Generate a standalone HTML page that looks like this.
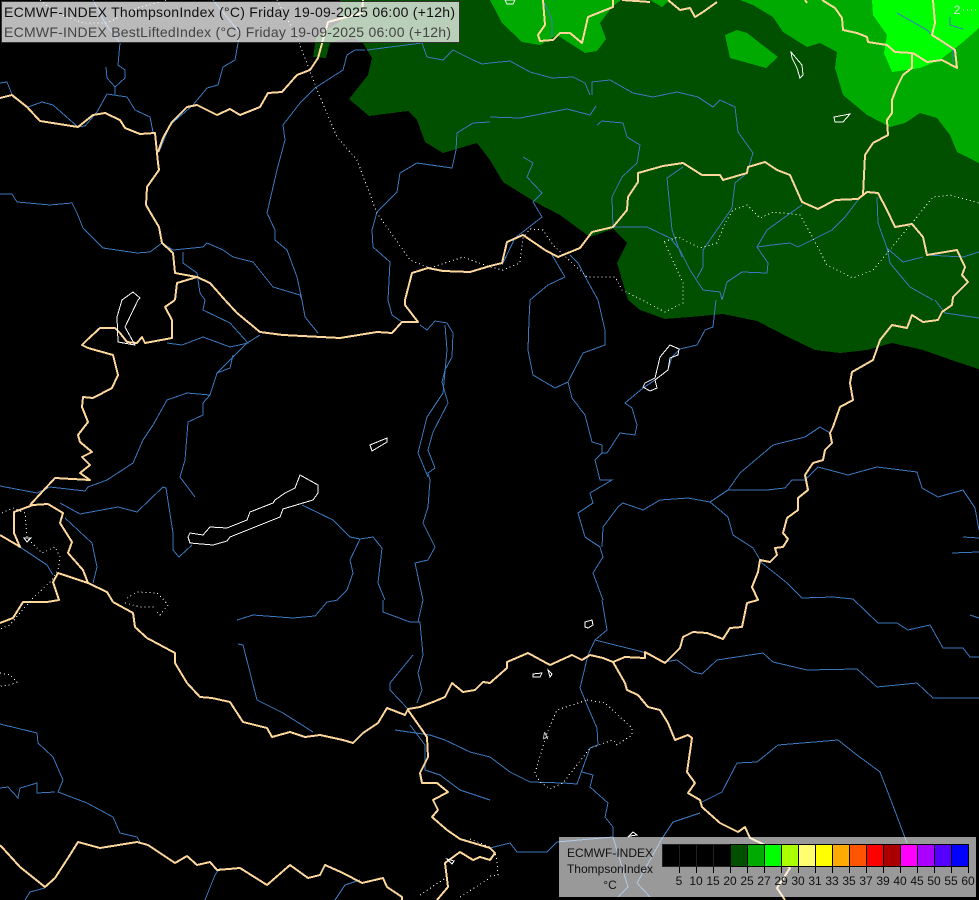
<!DOCTYPE html>
<html><head><meta charset="utf-8"><style>
html,body{margin:0;padding:0;background:#000}
svg{display:block}
text{font-family:"Liberation Sans",sans-serif}
.r polyline{fill:none;stroke:#3b78bd;stroke-width:1}
.b polyline{fill:none;stroke:#fdd69c;stroke-width:2;stroke-linejoin:round}
.d polyline{fill:none;stroke:#fff;stroke-width:1;stroke-dasharray:1 3}
.w polygon{fill:none;stroke:#fff;stroke-width:1}
.t line{stroke:#000;stroke-width:1}
.l text{font-size:12px;fill:#111;text-anchor:middle}
</style></head><body>
<svg width="979" height="900" viewBox="0 0 979 900" xmlns="http://www.w3.org/2000/svg" shape-rendering="crispEdges">
<rect width="979" height="900" fill="#000"/>
<!-- dark green -->
<polygon fill="#005000" points="340,0 340,22 322,32 316,38 313,57 326,58 330,43 353,37 363,43 372,58 368,75 349,99 369,116 408,111 417,120 425,142 443,153 477,143 490,160 503,182 535,202 560,215 590,237 613,229 627,243 617,263 628,300 640,310 665,319 690,317 723,314 757,321 790,338 815,350 840,353 867,350 892,343 923,350 957,362 979,369 979,0"/>
<!-- mid green -->
<polygon fill="#00aa00" points="490,0 502,23 522,42 540,45 557,35 585,53 597,51 606,39 600,23 612,7 621,0"/>
<polygon fill="#00aa00" points="650,0 662,7 670,0"/>
<polygon fill="#00aa00" points="740,0 753,5 773,17 783,32 807,47 820,43 837,52 835,68 843,95 867,115 890,127 905,123 920,113 937,118 950,135 957,152 979,163 979,0"/>
<polygon fill="#00aa00" points="725,35 737,30 747,33 778,57 766,68 730,58"/>
<!-- bright green -->
<polygon fill="#00ff00" points="872,0 873,15 887,35 884,53 892,72 920,68 940,60 963,42 979,28 979,0"/>
<!-- rivers -->
<g class="r">
<polyline points="0,83 7,82 13,97 28,107 42,102 53,105 78,127 85,126 97,112 107,94 127,97 135,110 150,117 153,132"/>
<polyline points="115,95 115,87 125,78 125,70 118,65 120,43 105,23 93,0"/>
<polyline points="115,87 107,78 106,67"/>
<polyline points="159,152 170,125 193,105 207,88 218,85 223,67 235,60 238,43 240,33 213,0"/>
<polyline points="0,194 12,194 17,202 50,205 72,203 77,213 83,228 103,248 137,253 150,252 162,243"/>
<polyline points="162,243 173,250 203,247 207,243 223,250 233,257 253,262 273,287 300,295 302,300 305,317 318,333"/>
<polyline points="183,252 183,263 197,273 200,293 205,300 203,310 230,323 248,343 230,347 203,337 182,345 167,343"/>
<polyline points="365,50 355,50 347,55 343,70 315,88 300,103 283,125 285,140 277,170 267,213 275,230 275,240 287,250 297,277 302,300"/>
<polyline points="490,122 473,123 457,133 456,150 452,168 417,163 400,173 397,192 377,212 372,230 373,247 390,262 388,300 392,315 402,322"/>
<polyline points="367,50 422,43 427,57 443,60 453,50 473,60 482,64 490,63 510,61 530,72 552,78 573,77 585,83 590,95"/>
<polyline points="592,95 592,82 610,80 633,93 653,97 677,92 698,97 713,107 720,100 735,107 738,132 753,153 747,173 735,183 732,208 703,250 703,267 697,278"/>
<polyline points="490,117 520,118 567,109 590,115 596,106"/>
<polyline points="597,125 602,121 623,123 627,137 640,145 637,163 622,177 612,197 613,227"/>
<polyline points="613,227 647,227 670,238 680,250 690,270 703,290 720,292 722,300"/>
<polyline points="683,167 667,178 672,230 682,257"/>
<polyline points="523,157 533,163 527,177 542,193 533,202 542,217 515,238 502,265"/>
<polyline points="552,255 565,277 548,285 530,300 529,320 528,350 533,375 555,388 568,382"/>
<polyline points="570,255 578,263 587,280 598,300"/>
<polyline points="722,300 727,282 742,272 767,273 768,263 757,247 767,230 785,217 802,205"/>
<polyline points="757,247 772,245 790,243 798,247 832,230 845,217 858,200"/>
<polyline points="877,197 878,223 887,248 903,262 923,257"/>
<polyline points="887,248 890,263 910,287 933,300"/>
<polyline points="927,255 963,257 979,252"/>
<polyline points="935,300 945,313 979,318"/>
<polyline points="543,0 552,20 552,37"/>
<polyline points="897,13 927,30 932,35 953,50 953,63"/>
<polyline points="950,17 950,25 963,29"/>
<polyline points="598,300 605,330 605,345 583,353 568,382 572,398 585,415 592,442 602,445 602,453 595,460 600,480 612,480 590,493 593,503 578,513 585,537 600,547 603,557 593,573 603,600"/>
<polyline points="716,300 713,327 705,330 697,345 680,349 672,357 668,370 655,380 643,388 625,403 632,408 637,425 635,435 620,433 607,453 602,453"/>
<polyline points="602,547 603,527 618,507 623,503 643,510 660,500 688,498 710,502 728,490 740,473 773,445 805,437 820,427 830,433"/>
<polyline points="728,490 767,490 785,488 792,480 805,480 818,467 848,475 877,467 917,472 922,488 938,497 963,490 975,508 979,530"/>
<polyline points="710,502 728,517 733,535 753,548 762,563 787,583 802,598 833,597 853,599 878,623 897,623 908,630 930,625 943,648 963,648 970,657 979,657"/>
<polyline points="963,537 979,538"/>
<polyline points="952,553 979,552"/>
<polyline points="970,615 979,618"/>
<polyline points="602,600 607,630 595,640 588,655 580,688 590,712 597,728 598,745 590,748 577,784 563,783 530,782 510,772 490,757 470,752 445,740 430,735 395,730"/>
<polyline points="595,640 643,652 663,662 677,660 693,672 702,674 717,660 763,653 773,662 807,670 857,669 877,687 917,683 933,698 979,698"/>
<polyline points="582,772 593,775 590,787 608,803 605,817 613,827 613,837 628,887 618,897"/>
<polyline points="700,813 673,822 663,837 637,883 650,897"/>
<polyline points="702,802 722,792 737,763 757,762 778,745 838,740 857,755 880,772 892,803 907,843"/>
<polyline points="490,848 510,843 517,852 547,852 557,842 613,837"/>
<polyline points="0,724 37,733 38,743 53,757 63,780 58,792 87,803 113,817 120,833 137,837 140,842"/>
<polyline points="0,788 8,787 18,798 20,788 37,783 37,793 55,792"/>
<polyline points="237,620 253,615 293,618 315,616 327,602 338,600"/>
<polyline points="238,644 243,645 257,700 283,713 313,732"/>
<polyline points="383,600 383,612 410,622 420,622 423,655 418,673 422,690 417,703"/>
<polyline points="413,655 390,683 390,690 408,709"/>
<polyline points="423,600 418,622"/>
<polyline points="420,325 427,330 435,321 447,323 453,333 452,357 445,370 442,382 448,403 433,432 428,450 435,468 428,473 430,480 428,507 423,523 435,547 428,560 415,563 423,600"/>
<polyline points="445,325 447,350 443,393 427,417 418,453 428,477"/>
<polyline points="0,486 37,493 50,487 85,491 88,487 107,480 133,463 143,440 153,425 167,400 187,393 210,395 217,373 247,343 260,335"/>
<polyline points="210,395 203,403 203,415 188,422 185,460 180,477 195,497"/>
<polyline points="217,373 230,368 233,355"/>
<polyline points="60,503 80,514 118,507 137,512 163,487 166,488 173,533 173,550 179,557 192,545"/>
<polyline points="65,518 92,543 97,567 93,583"/>
<polyline points="20,547 47,565 53,575"/>
<polyline points="302,505 333,520 350,537 360,539 373,537 382,548 378,583 385,600"/>
<polyline points="360,539 350,560 353,573 347,590 337,600"/>
<polyline points="410,725 425,745 425,770 440,775 460,790 490,800"/>
<polyline points="25,900 30,892 45,888"/>
<polyline points="205,900 215,875 220,868"/>
<polyline points="335,900 345,885 360,880"/>
</g>
<!-- borders -->
<g class="b">
<polyline points="0,98 12,95 27,107 40,121 78,127 93,115 105,113 120,120 125,128 140,134 155,133 158,163 159,170 147,187 146,205 153,217 159,227 162,243 173,253 175,273 197,277 210,283 225,300 237,313 260,332 283,335 340,338 377,332 392,333 402,322 418,322 405,305 405,300 412,273 428,268 443,271 470,272 490,266 502,263 507,242 523,235 545,250 558,257 580,248 592,232 613,227 627,210 628,197 638,182 638,173 663,166 683,163 702,175 720,175 723,180 747,173 748,167 765,162 777,170 790,175 802,202 818,209 835,200 858,199 867,192 878,193 887,210 895,227 912,224 923,237 927,255 957,250 965,267 962,275 968,282 953,297 952,305 942,312 938,320 923,322 912,315 907,328 892,325 880,340 873,360 852,372 850,383 853,400 840,407 833,427 830,433 832,443 825,450 823,460 813,463 805,475 808,490 798,498 798,510 787,518 783,533 788,539 783,547 775,548 777,555 770,562 760,560 758,572 752,587 758,600 747,603 742,627 730,628 723,639 707,633 693,632 683,637 680,648 665,663 645,652 645,658 625,657 613,662 603,658 590,655 582,660 572,655 550,665 528,653 507,662 507,668 490,683 483,682 475,690 463,692 452,683 445,697 433,702 420,707 408,709 405,715 387,708 378,723 363,733 353,743 343,740 320,735 305,737 290,732 272,737 267,728 243,722 230,702 212,698 200,697 187,683 175,663 175,653 147,638 135,627 133,613 113,602"/>
<polyline points="158,152 163,138 172,122 187,107 197,105 217,115 230,109 240,115 260,107 268,93 282,92 297,75 310,70 318,58 328,22 362,13 363,0"/>
<polyline points="175,300 177,283 197,277"/>
<polyline points="0,535 17,545 20,547 14,533 14,512 33,505 48,504 63,513 60,523 72,542 68,553 83,570 88,583 107,592 113,602"/>
<polyline points="30,505 55,478 90,480 80,473 90,465 82,457 92,452 80,442 78,435 88,422 82,407 83,397 93,398 112,388 118,375 113,355 88,348 82,345 87,340 100,328 115,328 120,333 127,342 137,343 142,337 145,343 172,338 172,320 165,307 175,300"/>
<polyline points="88,583 58,573 53,582 59,600 47,602 23,602 13,618 0,623"/>
<polyline points="0,845 20,867 45,887 55,878 68,858 78,842 100,848 137,842 148,845 175,863 187,856 197,865 210,862 217,870 240,868 267,885 290,865 308,878 320,875 325,865 343,873 362,883 383,878 387,887 402,897 402,900"/>
<polyline points="408,710 427,737 428,757 420,773 422,783 437,783 448,792 433,800 438,810 432,817 447,830 460,839 490,848 495,853 490,860 480,857 473,860 460,852 445,863 448,887 437,900"/>
<polyline points="613,662 625,683 627,690 638,695 648,707 660,710 668,723 675,740 688,735 692,738 687,772 695,783 688,793 700,800 702,807 720,823 738,832 745,827 750,838 765,845 790,868 777,888 785,900"/>
<polyline points="543,0 545,25 538,35 540,41 553,40 560,33 570,33 582,43 588,17 613,7 613,0"/>
<polyline points="622,0 650,2"/>
<polyline points="668,0 680,10 690,8 695,17 703,12 717,2"/>
<polyline points="805,0 807,3"/>
<polyline points="822,0 835,8 842,18 843,30 857,33 867,37 868,42 887,45 895,52 912,53 912,68 903,75 897,87 892,100 892,113 887,120 888,135 873,143 865,155 863,195"/>
<polyline points="913,53 927,62 942,60 957,68 955,50 940,40 932,35 935,23 933,0"/>
</g>
<!-- dotted contours -->
<g class="d">
<polyline points="40,0 57,13 83,23 107,23 140,7 167,0"/>
<polyline points="277,0 297,37 317,90 337,137 357,160 377,213 410,260 430,268 463,257 490,267 503,270 520,263 523,238 530,229 543,230 553,245 587,277 615,277 622,290 642,300 665,312 683,303 683,283 665,243 663,242 678,237 700,248 717,243 725,223 733,210 747,205 760,218 773,212 800,215 813,238 827,265 853,278 873,270 912,223 933,197 950,195 979,203"/>
<polyline points="963,10 979,10"/>
<polyline points="2,513 13,508 25,513 27,538 42,553 55,547 60,557 58,570 52,580 33,598 20,613 10,625 0,629"/>
<polyline points="127,598 137,592 157,593 162,598 168,605 160,615 155,610"/>
<polyline points="125,603 140,607 155,607"/>
<polyline points="0,673 10,675 17,682 10,685 0,686"/>
<polyline points="587,700 605,703 632,728 632,735 617,745 613,740 590,748 563,783 550,789 540,782 535,773 547,733 557,710 587,700"/>
<polyline points="490,876 498,875 497,860 495,853"/>
<polyline points="420,895 447,877"/>
<polyline points="460,897 490,878"/>
<polyline points="470,839 490,847"/>
</g>
<!-- lakes -->
<g class="w">
<polygon points="190,533 203,535 210,527 227,528 247,520 250,512 273,503 275,500 285,493 295,488 300,475 318,485 318,493 313,500 283,509 280,517 230,537 227,541 213,545 190,543 188,537"/>
<polygon points="370,445 387,438 387,442 372,451"/>
<polygon points="133,292 140,298 138,300 125,327 135,345 118,342 117,317 122,300"/>
<polygon points="670,345 679,349 678,355 670,358 668,370 655,380 657,388 650,391 643,387 645,383 655,378 660,357"/>
<polygon points="791,52 802,65 803,75 800,78 797,68 792,58"/>
<polygon points="834,117 850,114 843,122 835,122"/>
<polygon points="505,0 515,0 513,4 507,4"/>
<polygon points="585,622 592,620 593,625 588,628 585,627"/>
<polygon points="533,674 542,673 540,677 533,677"/>
<polygon points="548,670 552,674 550,677"/>
<polygon points="628,837 633,832 637,835 630,836"/>
<polygon points="24,538 31,538 27,542"/>
<polygon points="447,859 454,861 452,864"/>
</g>
<text x="545" y="740" font-size="11" fill="#ddd" text-anchor="middle" transform="rotate(-25 545 736)">4</text>
<text x="957" y="14" font-size="12" fill="#ddd" text-anchor="middle">2</text>
<!-- header -->
<rect x="1.5" y="1.5" width="458" height="41" fill="#fff" fill-opacity=".73" stroke="#333" stroke-width="1"/>
<text x="4" y="17" font-size="14" fill="#111" textLength="451" lengthAdjust="spacing">ECMWF-INDEX ThompsonIndex (°C) Friday 19-09-2025 06:00 (+12h)</text>
<text x="4" y="37" font-size="14" fill="#444" textLength="447" lengthAdjust="spacing">ECMWF-INDEX BestLiftedIndex (°C) Friday 19-09-2025 06:00 (+12h)</text>
<!-- legend -->
<rect x="559" y="837" width="417" height="60" fill="#fff" fill-opacity=".6"/>
<g class="l">
<text x="610" y="857">ECMWF-INDEX</text>
<text x="610" y="873">ThompsonIndex</text>
<text x="610" y="889">°C</text>
</g>
<g stroke="#000" stroke-width="1">
<rect x="662.5" y="844.5" width="17" height="22" fill="#000" stroke="#222"/>
<rect x="679.5" y="844.5" width="17" height="22" fill="#000" stroke="#222"/>
<rect x="696.5" y="844.5" width="17" height="22" fill="#000" stroke="#222"/>
<rect x="713.5" y="844.5" width="17" height="22" fill="#000" stroke="#222"/>
<rect x="730.5" y="844.5" width="17" height="22" fill="#005000"/>
<rect x="747.5" y="844.5" width="17" height="22" fill="#00aa00"/>
<rect x="764.5" y="844.5" width="17" height="22" fill="#00ff00"/>
<rect x="781.5" y="844.5" width="17" height="22" fill="#aaff00"/>
<rect x="798.5" y="844.5" width="17" height="22" fill="#ffff70"/>
<rect x="815.5" y="844.5" width="17" height="22" fill="#ffff00"/>
<rect x="832.5" y="844.5" width="17" height="22" fill="#ffaa00"/>
<rect x="849.5" y="844.5" width="17" height="22" fill="#ff5500"/>
<rect x="866.5" y="844.5" width="17" height="22" fill="#ff0000"/>
<rect x="883.5" y="844.5" width="17" height="22" fill="#aa0000"/>
<rect x="900.5" y="844.5" width="17" height="22" fill="#ff00ff"/>
<rect x="917.5" y="844.5" width="17" height="22" fill="#aa00ff"/>
<rect x="934.5" y="844.5" width="17" height="22" fill="#5500ff"/>
<rect x="951.5" y="844.5" width="17" height="22" fill="#0000ff"/>
</g>
<g class="t">
<line x1="679.5" y1="867" x2="679.5" y2="873"/><line x1="696.5" y1="867" x2="696.5" y2="873"/><line x1="713.5" y1="867" x2="713.5" y2="873"/><line x1="730.5" y1="867" x2="730.5" y2="873"/><line x1="747.5" y1="867" x2="747.5" y2="873"/><line x1="764.5" y1="867" x2="764.5" y2="873"/><line x1="781.5" y1="867" x2="781.5" y2="873"/><line x1="798.5" y1="867" x2="798.5" y2="873"/><line x1="815.5" y1="867" x2="815.5" y2="873"/><line x1="832.5" y1="867" x2="832.5" y2="873"/><line x1="849.5" y1="867" x2="849.5" y2="873"/><line x1="866.5" y1="867" x2="866.5" y2="873"/><line x1="883.5" y1="867" x2="883.5" y2="873"/><line x1="900.5" y1="867" x2="900.5" y2="873"/><line x1="917.5" y1="867" x2="917.5" y2="873"/><line x1="934.5" y1="867" x2="934.5" y2="873"/><line x1="951.5" y1="867" x2="951.5" y2="873"/><line x1="968.5" y1="867" x2="968.5" y2="873"/>
</g>
<g class="l">
<text x="679" y="885">5</text><text x="696" y="885">10</text><text x="713" y="885">15</text><text x="730" y="885">20</text><text x="747" y="885">25</text><text x="764" y="885">27</text><text x="781" y="885">29</text><text x="798" y="885">30</text><text x="815" y="885">31</text><text x="832" y="885">33</text><text x="849" y="885">35</text><text x="866" y="885">37</text><text x="883" y="885">39</text><text x="900" y="885">40</text><text x="917" y="885">45</text><text x="934" y="885">50</text><text x="951" y="885">55</text><text x="968" y="885">60</text>
</g>
</svg>
</body></html>
